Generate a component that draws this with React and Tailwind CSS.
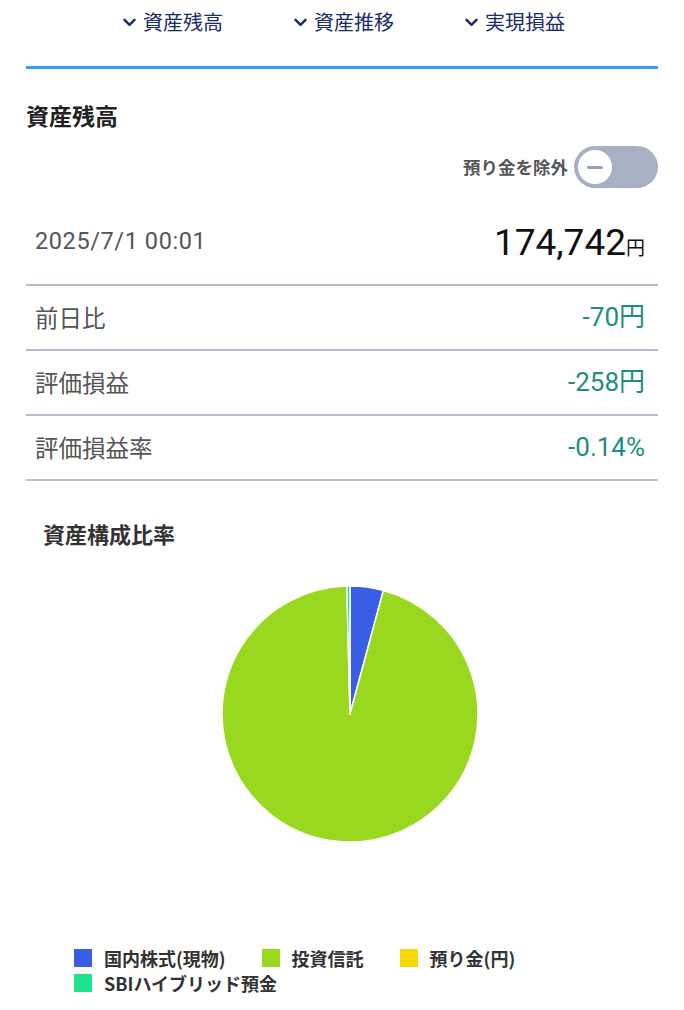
const JP = { fontFamily: '"Noto Sans CJK JP", sans-serif' };
const NUM = { fontFamily: 'Roboto, "Noto Sans CJK JP", sans-serif' };

const slices = [
  { label: "国内株式(現物)", value: 4.2, color: "#3a5ee3" },
  { label: "投資信託", value: 95.4, color: "#9ad820" },
  { label: "預り金(円)", value: 0, color: "#f7d904" },
  { label: "SBIハイブリッド預金", value: 0.4, color: "#1de38e" },
];

function arc(cx, cy, r, a0, a1) {
  const rad = (a) => (a * Math.PI) / 180;
  const x0 = cx + r * Math.sin(rad(a0));
  const y0 = cy - r * Math.cos(rad(a0));
  const x1 = cx + r * Math.sin(rad(a1));
  const y1 = cy - r * Math.cos(rad(a1));
  const large = a1 - a0 > 180 ? 1 : 0;
  return `M${cx},${cy} L${x0},${y0} A${r},${r} 0 ${large} 1 ${x1},${y1} Z`;
}

function Pie() {
  const total = slices.reduce((s, x) => s + x.value, 0);
  let start = 0;
  return (
    <svg width="260" height="260" viewBox="0 0 260 260">
      {slices.map((s) => {
        if (!s.value) return null;
        const end = start + (s.value / total) * 360;
        const d = arc(130, 130, 128, start, end);
        start = end;
        return <path key={s.label} d={d} fill={s.color} stroke="#fff" strokeWidth="1.5" strokeLinejoin="round" />;
      })}
    </svg>
  );
}

function Chevron() {
  return (
    <svg width="13" height="9" viewBox="0 0 13 9" fill="none">
      <path d="M1.5 1.8 L6.5 6.8 L11.5 1.8" stroke="currentColor" strokeWidth="2.4" strokeLinecap="round" strokeLinejoin="round" />
    </svg>
  );
}

const navItems = ["資産残高", "資産推移", "実現損益"];

const rows = [
  { label: "前日比", value: "-70円" },
  { label: "評価損益", value: "-258円" },
  { label: "評価損益率", value: "-0.14%" },
];

export default function App() {
  return (
    <div className="bg-white w-[684px] h-[1010px] overflow-hidden px-[26px]" style={JP}>
      <nav className="h-[44px] flex items-center justify-center gap-[71px] pl-[4px]">
        {navItems.map((n) => (
          <div key={n} className="flex items-center gap-[7px] text-[#1b2a6b] text-[20px]">
            <Chevron />
            <span>{n}</span>
          </div>
        ))}
      </nav>

      <div className="mt-[22px] border-t-[3px] border-[#2ea4ee]" />

      <h2 className="mt-[31px] text-[23px] leading-[30px] font-bold text-[#222]">資産残高</h2>

      <div className="mt-[16px] flex justify-end items-center gap-[6px]">
        <span className="text-[17.5px] font-semibold text-[#555]">預り金を除外</span>
        <div className="w-[84px] h-[42px] rounded-full bg-[#a8b0c4] flex items-center pl-[2px]">
          <div className="w-[38px] h-[38px] rounded-full bg-white border-[2px] border-[#a8b0c4] flex items-center justify-center">
            <div className="w-[16px] h-[3px] rounded-full bg-[#98a0b4]" />
          </div>
        </div>
      </div>

      <div className="h-[98px] pt-[12px] pl-[9px] pr-[13px] flex items-center justify-between border-b-2 border-[#b4bccb]">
        <span className="text-[23.5px] tracking-[0.6px] text-[#555]" style={NUM}>2025/7/1 00:01</span>
        <span className="flex items-baseline text-[#111]">
          <span className="text-[37px] leading-none" style={NUM}>174,742</span>
          <span className="text-[19px] leading-none">円</span>
        </span>
      </div>

      {rows.map((r) => (
        <div key={r.label} className="h-[65px] pl-[9px] pr-[13px] flex items-center justify-between border-b-2 border-[#b4bccb]">
          <span className="text-[23.5px] text-[#555]">{r.label}</span>
          <span className="text-[26px] text-[#1d8d7e]" style={NUM}>{r.value}</span>
        </div>
      ))}

      <h3 className="mt-[38px] pl-[17px] text-[22px] leading-[28px] font-bold text-[#333]">資産構成比率</h3>

      <div className="mt-[37px] flex justify-center pl-[16px]">
        <Pie />
      </div>

      <div className="mt-[105px] pl-[48px] flex flex-wrap gap-x-[36px] gap-y-[7px]">
        {slices.map((s) => (
          <div key={s.label} className="flex items-center gap-[12px] h-[18px]">
            <span className="w-[18px] h-[18px]" style={{ background: s.color }} />
            <span className="text-[18px] font-bold text-[#333]">{s.label}</span>
          </div>
        ))}
      </div>
    </div>
  );
}
